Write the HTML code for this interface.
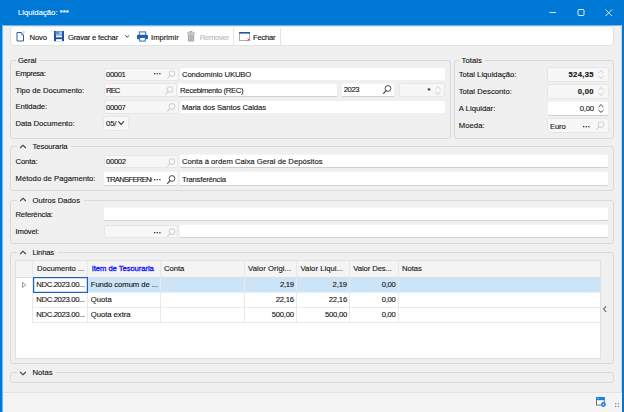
<!DOCTYPE html>
<html>
<head>
<meta charset="utf-8">
<title>Liquidação</title>
<style>
*{box-sizing:border-box;margin:0;padding:0}
html,body{width:624px;height:412px;overflow:hidden}
body{position:relative;background:#f0f0f0;font-family:"Liberation Sans",sans-serif;font-size:7.7px;color:#141414;line-height:10px}
.abs{position:absolute}
.t{position:absolute;white-space:nowrap;height:10px;line-height:10px;-webkit-text-stroke:0.12px currentColor}
.grp{position:absolute;border:1px solid #dadada;border-radius:3px}
.lg{position:absolute;background:#f0f0f0;height:10px}
.box{position:absolute;border-radius:2.5px}
.ro{background:#f7f7f7;border:1px solid #e6e6e6}
.wh{background:#fff;border:1px solid #f1f1f1;border-top-color:#f4f4f4;border-bottom-color:#d0d0d0}
.whn{background:#fff}
.vl{position:absolute;width:1px;background:#e8e8e8}
.hl{position:absolute;height:1px;background:#ebebeb}
svg{position:absolute;overflow:visible}
</style>
</head>
<body>
<!-- window frame -->
<div class="abs" style="left:0;top:0;width:624px;height:25px;background:#0078d5"></div>
<div class="abs" style="left:0;top:25px;width:624px;height:1px;background:#7ab6e4"></div>
<div class="abs" style="left:0;top:0;width:2px;height:412px;background:#0078d5"></div>
<div class="abs" style="left:2px;top:25px;width:1px;height:387px;background:#7ab6e4"></div>
<div class="abs" style="left:622px;top:0;width:2px;height:412px;background:#0078d5"></div>
<div class="abs" style="left:621px;top:25px;width:1px;height:387px;background:#bcd8ee"></div>
<!-- caption buttons -->
<svg style="left:549px;top:8px;opacity:0.88" width="64" height="10" viewBox="0 0 64 10">
 <path d="M0.5 4.5h6.5" stroke="#fff" stroke-width="1" fill="none"/>
 <rect x="29" y="1.5" width="6" height="6" rx="1" stroke="#fff" stroke-width="1" fill="none"/>
 <path d="M56.5 1.5l6.5 6.5M63 1.5l-6.5 6.5" stroke="#fff" stroke-width="1" fill="none"/>
</svg>

<!-- toolbar -->
<div class="abs" style="left:10px;top:26px;width:603.5px;height:20.25px;background:#fff;border:1px solid #e2e2e2;border-radius:4px"></div>
<svg style="left:15.5px;top:31px" width="10" height="11" viewBox="0 0 10 11">
 <path d="M1 1.5h4.2l2.3 2.3V10H1z" fill="#fff" stroke="#265ea8" stroke-width="1"/>
 <path d="M5.2 1.5v2.3h2.3" fill="none" stroke="#265ea8" stroke-width="0.6"/>
 <rect x="7.2" y="0.3" width="1.3" height="1.3" fill="#7fb0e8"/>
</svg>
<svg style="left:54px;top:31.3px" width="10" height="10.2" viewBox="0 0 10 10.2">
 <rect x="0" y="0" width="10" height="10.2" fill="#1c52a0"/>
 <rect x="1.7" y="0.3" width="6.4" height="3.6" fill="#9cc0ea"/>
 <rect x="2.6" y="0.8" width="2" height="2.2" fill="#1c52a0"/>
 <rect x="3.1" y="1.3" width="1" height="1.2" fill="#9cc0ea"/>
 <rect x="2" y="4.4" width="6" height="1.9" fill="#fff"/>
 <rect x="2" y="8.2" width="6" height="2" fill="#fff"/>
</svg>
<svg style="left:125.2px;top:35.2px" width="4.4" height="3" viewBox="0 0 4.4 3"><path d="M0.3 0.4l1.9 1.9l1.9-1.9" stroke="#333" stroke-width="1" fill="none"/></svg>
<svg style="left:137px;top:31px" width="11" height="11" viewBox="0 0 12 11">
 <rect x="2.5" y="0.5" width="7" height="4" fill="#fff" stroke="#1f5fb0" stroke-width="1"/>
 <rect x="0" y="3.5" width="12" height="5" rx="1" fill="#1f5fb0"/>
 <rect x="3" y="6.5" width="6" height="4" fill="#fff" stroke="#1f5fb0" stroke-width="1"/>
</svg>
<svg style="left:187px;top:31px" width="8" height="10.4" viewBox="0 0 8 10.4">
 <rect x="0" y="1.4" width="8" height="1.2" fill="#a6a6a6"/>
 <rect x="2.6" y="0" width="2.8" height="1.5" fill="#a6a6a6"/>
 <rect x="0.8" y="3.2" width="6.4" height="7.2" rx="0.7" fill="#adadad"/>
 <rect x="2.5" y="4" width="0.7" height="5.4" fill="#cfcfcf"/>
 <rect x="4.8" y="4" width="0.7" height="5.4" fill="#cfcfcf"/>
</svg>
<div class="abs" style="left:233px;top:28px;width:1px;height:18px;background:#e4e4e4"></div>
<svg style="left:238.6px;top:32px" width="11" height="9" viewBox="0 0 11 9">
 <rect x="0.4" y="0.4" width="10.2" height="8" fill="#fff" stroke="#9c9c9c" stroke-width="0.8"/>
 <rect x="0" y="0" width="11" height="1.6" fill="#1f55a8"/>
 <path d="M8.6 6.5l2 2M10.6 6.5l-2 2" stroke="#e02a2a" stroke-width="0.9"/>
</svg>
<div class="abs" style="left:280px;top:28px;width:1px;height:18px;background:#e4e4e4"></div>

<!-- groups -->
<div class="grp" style="left:10px;top:60px;width:441px;height:78.5px"></div>
<div class="lg" style="left:15.5px;top:55.5px;width:23.5px"></div>
<div class="grp" style="left:453.5px;top:60px;width:160.5px;height:78.5px"></div>
<div class="lg" style="left:458.5px;top:55.5px;width:26px"></div>
<div class="grp" style="left:10px;top:146.25px;width:604px;height:44.5px"></div>
<div class="lg" style="left:17px;top:141.5px;width:54px"></div>
<div class="grp" style="left:10px;top:199.5px;width:604px;height:44.5px"></div>
<div class="lg" style="left:17px;top:194.5px;width:66.5px"></div>
<div class="grp" style="left:10px;top:252px;width:604px;height:111.5px"></div>
<div class="lg" style="left:17px;top:247.5px;width:40.5px"></div>
<div class="grp" style="left:10px;top:372.25px;width:604px;height:11px"></div>
<div class="lg" style="left:17px;top:367.5px;width:39px"></div>

<!-- Geral fields -->
<div class="box ro"  style="left:103.5px;top:67.5px;width:75px;height:13px"></div>
<div class="box whn" style="left:180px;top:68px;width:265px;height:12px"></div>
<div class="box ro"  style="left:103.5px;top:83px;width:73px;height:14px"></div>
<div class="box wh"  style="left:177px;top:83px;width:161px;height:14px"></div>
<div class="box wh"  style="left:341px;top:83px;width:54px;height:14px"></div>
<div class="box ro"  style="left:398.5px;top:83px;width:46.5px;height:14px"></div>
<div class="box ro"  style="left:103.5px;top:100px;width:75px;height:13.5px"></div>
<div class="box whn" style="left:180px;top:100.5px;width:265px;height:12.5px"></div>
<div class="box ro"  style="left:103px;top:116px;width:26px;height:14.5px"></div>
<!-- Totais fields -->
<div class="box ro" style="left:547px;top:67px;width:61.5px;height:14.5px"></div>
<div class="box ro" style="left:547px;top:84px;width:61.5px;height:14.5px"></div>
<div class="box wh" style="left:547px;top:101px;width:61.5px;height:14.5px"></div>
<div class="box ro" style="left:547px;top:118px;width:61.5px;height:14.5px"></div>
<!-- Tesouraria fields -->
<div class="box ro" style="left:104px;top:155px;width:74px;height:13px"></div>
<div class="box wh" style="left:179px;top:154px;width:430px;height:14px"></div>
<div class="box wh" style="left:103px;top:171px;width:75px;height:15px"></div>
<div class="box wh" style="left:179px;top:171px;width:430px;height:15px"></div>
<!-- Outros Dados fields -->
<div class="box wh" style="left:103px;top:207px;width:506px;height:14px"></div>
<div class="box ro" style="left:104px;top:225px;width:74px;height:13px"></div>
<div class="box wh" style="left:179px;top:224px;width:430px;height:14px"></div>

<!-- grid -->
<div class="abs" style="left:15px;top:260.25px;width:586px;height:98.5px;background:#fff;border:1px solid #e0e0e0"></div>
<div class="abs" style="left:16px;top:261.25px;width:584px;height:15.25px;background:#f4f4f4"></div>
<div class="abs" style="left:32.5px;top:277px;width:567.5px;height:15px;background:#cce4f7"></div>
<div class="hl" style="left:16px;top:276.5px;width:584px;background:#dedede"></div>
<div class="hl" style="left:32.5px;top:291.75px;width:567.5px;background:#e6eef5"></div>
<div class="hl" style="left:32.5px;top:306.75px;width:567.5px"></div>
<div class="hl" style="left:32.5px;top:321.75px;width:567.5px"></div>
<div class="vl" style="left:32px;top:261.25px;height:61.5px"></div>
<div class="vl" style="left:87px;top:261.25px;height:61.5px"></div>
<div class="vl" style="left:159.5px;top:261.25px;height:61.5px"></div>
<div class="vl" style="left:244px;top:261.25px;height:61.5px"></div>
<div class="vl" style="left:296.25px;top:261.25px;height:61.5px"></div>
<div class="vl" style="left:348.75px;top:261.25px;height:61.5px"></div>
<div class="vl" style="left:397.5px;top:261.25px;height:61.5px"></div>
<div class="abs" style="left:33px;top:277px;width:54.5px;height:15.5px;background:#fff;border:1px solid #1b62c4;box-shadow:inset 0 0 0 0.5px rgba(27,98,196,0.45)"></div>
<svg style="left:22.2px;top:282.4px" width="4.4" height="5.8" viewBox="0 0 4.4 5.8"><path d="M0.5 0.4l3.3 2.5l-3.3 2.5z" stroke="#8a8a8a" stroke-width="0.85" fill="none"/></svg>
<svg style="left:602.8px;top:306.4px" width="3.6" height="6.2" viewBox="0 0 3.6 6.2"><path d="M3.2 0.3l-2.7 2.8l2.7 2.8" stroke="#6a6a6a" stroke-width="1.15" fill="none"/></svg>

<!-- status bar -->
<div class="abs" style="left:2.5px;top:391.5px;width:619px;height:21px;background:#f4f4f4;border-top:1px solid #e2e2e2"></div>

<div class="t" style="left:18.00px;top:8.00px;letter-spacing:0.021px;color:#fff;">Liquidação: ***</div>
<div class="t" style="left:29.50px;top:32.50px;letter-spacing:-0.176px;">Novo</div>
<div class="t" style="left:68.00px;top:32.50px;letter-spacing:-0.228px;">Gravar e fechar</div>
<div class="t" style="left:151.00px;top:32.50px;letter-spacing:-0.008px;">Imprimir</div>
<div class="t" style="left:199.70px;top:32.50px;letter-spacing:-0.312px;color:#b9b9b9;">Remover</div>
<div class="t" style="left:253.00px;top:32.50px;letter-spacing:-0.256px;">Fechar</div>
<div class="t" style="left:18.00px;top:56.00px;letter-spacing:-0.113px;">Geral</div>
<div class="t" style="left:15.50px;top:68.90px;letter-spacing:-0.363px;">Empresa:</div>
<div class="t" style="left:15.50px;top:85.50px;letter-spacing:-0.011px;">Tipo de Documento:</div>
<div class="t" style="left:15.50px;top:102.25px;letter-spacing:-0.109px;">Entidade:</div>
<div class="t" style="left:15.50px;top:118.50px;letter-spacing:-0.055px;">Data Documento:</div>
<div class="t" style="left:106.00px;top:69.75px;letter-spacing:-0.378px;">00001</div>
<div class="t" style="left:106.00px;top:85.75px;letter-spacing:-0.911px;">REC</div>
<div class="t" style="left:106.00px;top:102.75px;letter-spacing:-0.378px;">00007</div>
<div class="t" style="left:106.00px;top:118.75px;letter-spacing:-0.146px;">05/</div>
<div class="t" style="left:182.00px;top:69.75px;letter-spacing:-0.105px;">Condomínio UKUBO</div>
<div class="t" style="left:180.00px;top:85.75px;letter-spacing:-0.326px;">Recebimento (REC)</div>
<div class="t" style="left:182.00px;top:102.75px;letter-spacing:-0.082px;">Maria dos Santos Caldas</div>
<div class="t" style="left:343.75px;top:85.25px;letter-spacing:-0.402px;">2023</div>
<div class="t" style="left:427.50px;top:85.50px;letter-spacing:0.000px;">*</div>
<div class="t" style="left:461.50px;top:56.00px;letter-spacing:0.051px;">Totais</div>
<div class="t" style="left:458.70px;top:70.00px;letter-spacing:0.006px;">Total Liquidação:</div>
<div class="t" style="left:458.70px;top:87.00px;letter-spacing:0.020px;">Total Desconto:</div>
<div class="t" style="left:458.70px;top:104.20px;letter-spacing:0.034px;">A Liquidar:</div>
<div class="t" style="left:458.70px;top:121.40px;letter-spacing:0.057px;">Moeda:</div>
<div class="t" style="left:568.50px;top:70.00px;letter-spacing:0.297px;font-weight:bold;">524,35</div>
<div class="t" style="left:577.80px;top:87.00px;letter-spacing:0.258px;font-weight:bold;">0,00</div>
<div class="t" style="left:579.70px;top:104.20px;letter-spacing:-0.217px;">0,00</div>
<div class="t" style="left:550.00px;top:121.90px;letter-spacing:-0.162px;">Euro</div>
<div class="t" style="left:32.50px;top:142.25px;letter-spacing:-0.091px;">Tesouraria</div>
<div class="t" style="left:15.50px;top:157.00px;letter-spacing:-0.109px;">Conta:</div>
<div class="t" style="left:15.50px;top:173.90px;letter-spacing:0.004px;">Método de Pagamento:</div>
<div class="t" style="left:106.00px;top:157.25px;letter-spacing:-0.328px;">00002</div>
<div class="t" style="left:106.00px;top:174.75px;letter-spacing:-0.718px;width:45.75px;overflow:hidden;">TRANSFERENCIA</div>
<div class="t" style="left:182.00px;top:157.25px;letter-spacing:-0.002px;">Conta à ordem Caixa Geral de Depósitos</div>
<div class="t" style="left:182.00px;top:174.75px;letter-spacing:-0.228px;">Transferência</div>
<div class="t" style="left:32.50px;top:195.50px;letter-spacing:0.005px;">Outros Dados</div>
<div class="t" style="left:15.50px;top:210.25px;letter-spacing:-0.188px;">Referência:</div>
<div class="t" style="left:15.50px;top:226.75px;letter-spacing:-0.183px;">Imóvel:</div>
<div class="t" style="left:32.50px;top:248.00px;letter-spacing:-0.193px;">Linhas</div>
<div class="t" style="left:37.00px;top:264.25px;letter-spacing:-0.066px;">Documento ...</div>
<div class="t" style="left:91.75px;top:264.25px;letter-spacing:-0.085px;color:#1010ff;-webkit-text-stroke:0.3px #1010ff;">Item de Tesouraria</div>
<div class="t" style="left:164.00px;top:264.25px;letter-spacing:-0.053px;">Conta</div>
<div class="t" style="left:248.00px;top:264.25px;letter-spacing:0.078px;">Valor Origi...</div>
<div class="t" style="left:300.50px;top:264.25px;letter-spacing:0.023px;">Valor Liqui...</div>
<div class="t" style="left:353.25px;top:264.25px;letter-spacing:-0.091px;">Valor Des...</div>
<div class="t" style="left:402.00px;top:264.25px;letter-spacing:-0.069px;">Notas</div>
<div class="t" style="left:36.25px;top:280.00px;letter-spacing:-0.339px;">NDC.2023.00...</div>
<div class="t" style="left:36.25px;top:295.00px;letter-spacing:-0.339px;">NDC.2023.00...</div>
<div class="t" style="left:36.25px;top:310.00px;letter-spacing:-0.339px;">NDC.2023.00...</div>
<div class="t" style="left:90.75px;top:280.00px;letter-spacing:-0.062px;">Fundo comum de ...</div>
<div class="t" style="left:90.75px;top:295.00px;letter-spacing:0.009px;">Quota</div>
<div class="t" style="left:90.75px;top:310.00px;letter-spacing:-0.038px;">Quota extra</div>
<div class="t" style="left:280.00px;top:280.00px;letter-spacing:-0.305px;">2,19</div>
<div class="t" style="left:275.75px;top:295.00px;letter-spacing:-0.250px;">22,16</div>
<div class="t" style="left:271.75px;top:310.00px;letter-spacing:-0.253px;">500,00</div>
<div class="t" style="left:332.50px;top:280.00px;letter-spacing:-0.117px;">2,19</div>
<div class="t" style="left:328.75px;top:295.00px;letter-spacing:-0.200px;">22,16</div>
<div class="t" style="left:325.00px;top:310.00px;letter-spacing:-0.253px;">500,00</div>
<div class="t" style="left:381.75px;top:280.00px;letter-spacing:-0.305px;">0,00</div>
<div class="t" style="left:381.75px;top:295.00px;letter-spacing:-0.305px;">0,00</div>
<div class="t" style="left:381.75px;top:310.00px;letter-spacing:-0.305px;">0,00</div>
<div class="t" style="left:32.50px;top:368.25px;letter-spacing:-0.019px;">Notas</div>

<!-- icon defs -->
<svg width="0" height="0" style="left:0;top:0">
 <defs>
  <g id="magD"><circle cx="5" cy="3.5" r="2.9" fill="none" stroke="#3a3a3a" stroke-width="0.9"/><path d="M3 5.7L0.6 8.3" stroke="#3a3a3a" stroke-width="1.1" stroke-linecap="round"/></g>
  <g id="magL"><circle cx="5" cy="3.5" r="2.9" fill="none" stroke="#c3c3c3" stroke-width="0.8"/><path d="M3 5.7L0.6 8.3" stroke="#c3c3c3" stroke-width="1" stroke-linecap="round"/></g>
  <g id="dots"><rect x="0" y="0" width="1.3" height="1.3" fill="#333"/><rect x="2.6" y="0" width="1.3" height="1.3" fill="#333"/><rect x="5.2" y="0" width="1.3" height="1.3" fill="#333"/></g>
  <g id="spinL"><path d="M0.5 3L3 0.6L5.5 3M0.5 6L3 8.4L5.5 6" fill="none" stroke="#c4c4c4" stroke-width="0.85"/></g>
  <g id="spinD"><path d="M0.5 3L3 0.6L5.5 3M0.5 6L3 8.4L5.5 6" fill="none" stroke="#333" stroke-width="0.9"/></g>
  <g id="chevU"><path d="M0.2 4L3 1.2L5.8 4" fill="none" stroke="#3c3c3c" stroke-width="1.15"/></g>
  <g id="chevD"><path d="M0.2 1L3 3.8L5.8 1" fill="none" stroke="#3c3c3c" stroke-width="1.15"/></g>
 </defs>
</svg>
<!-- Geral lookups -->
<svg style="left:153.5px;top:73.2px" width="7" height="2"><use href="#dots"/></svg>
<svg style="left:167px;top:69.5px" width="9" height="9"><use href="#magL"/></svg>
<svg style="left:165px;top:85.5px" width="9" height="9"><use href="#magL"/></svg>
<svg style="left:383px;top:85.2px" width="9" height="9"><use href="#magD"/></svg>
<svg style="left:435px;top:85.5px" width="6" height="9"><use href="#spinL"/></svg>
<svg style="left:167px;top:102.5px" width="9" height="9"><use href="#magL"/></svg>
<svg style="left:118.2px;top:121.2px" width="6.2" height="4" viewBox="0 0 6.2 4"><path d="M0.3 0.4l2.8 2.9l2.8-2.9" stroke="#3a3a3a" stroke-width="1.2" fill="none"/></svg>
<!-- Totais -->
<svg style="left:597.5px;top:69.5px" width="6" height="9"><use href="#spinL"/></svg>
<svg style="left:597.5px;top:86.5px" width="6" height="9"><use href="#spinL"/></svg>
<svg style="left:597.5px;top:103.5px" width="6" height="9"><use href="#spinD"/></svg>
<svg style="left:582.5px;top:125.5px" width="7" height="2"><use href="#dots"/></svg>
<svg style="left:596px;top:121px" width="9" height="9"><use href="#magL"/></svg>
<!-- Tesouraria -->
<svg style="left:20px;top:144px" width="6" height="5"><use href="#chevU"/></svg>
<svg style="left:167px;top:157.5px" width="9" height="9"><use href="#magL"/></svg>
<svg style="left:153.5px;top:178.5px" width="7" height="2"><use href="#dots"/></svg>
<svg style="left:167px;top:174.5px" width="9" height="9"><use href="#magD"/></svg>
<!-- Outros Dados -->
<svg style="left:20px;top:197px" width="6" height="5"><use href="#chevU"/></svg>
<svg style="left:153.5px;top:231.5px" width="7" height="2"><use href="#dots"/></svg>
<svg style="left:167px;top:227.5px" width="9" height="9"><use href="#magL"/></svg>
<!-- Linhas / Notas chevrons -->
<svg style="left:20px;top:250px" width="6" height="5"><use href="#chevU"/></svg>
<svg style="left:20px;top:370.5px" width="6" height="5"><use href="#chevD"/></svg>
<!-- status bar icons -->
<svg style="left:596.2px;top:397.2px" width="10" height="10" viewBox="0 0 10 10">
 <rect x="0.4" y="0.4" width="7.8" height="7.6" fill="#fff" stroke="#505050" stroke-width="0.8"/>
 <rect x="0" y="0" width="8.6" height="3.2" fill="#1c80e2"/>
 <rect x="1.6" y="1" width="1.4" height="1" fill="#8cc2f2"/>
 <circle cx="7.4" cy="7.5" r="2.4" fill="#1c80e2"/>
 <circle cx="7.4" cy="7.5" r="0.8" fill="#fff"/>
</svg>
<svg style="left:615.2px;top:403.3px" width="5" height="5" viewBox="0 0 5 5">
 <rect x="0" y="0" width="1.3" height="1.3" fill="#8e8e8e"/><rect x="2.8" y="0" width="1.3" height="1.3" fill="#8e8e8e"/>
 <rect x="0" y="2.8" width="1.3" height="1.3" fill="#8e8e8e"/><rect x="2.8" y="2.8" width="1.3" height="1.3" fill="#8e8e8e"/>
</svg>
</body>
</html>
